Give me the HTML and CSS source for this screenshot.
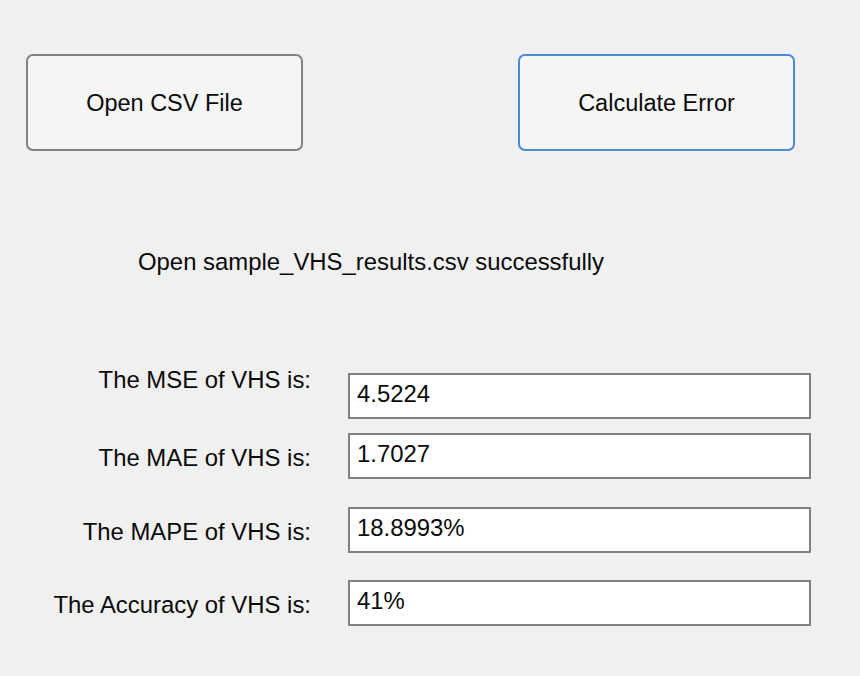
FILE: index.html
```html
<!DOCTYPE html>
<html lang="en">
<head>
<meta charset="utf-8">
<title>VHS Error Calculator</title>
<link rel="stylesheet" href="styles.css">
</head>
<body>
<div class="app">
  <div class="toolbar">
    <button class="btn">Open CSV File</button>
    <button class="btn btn-focus">Calculate Error</button>
  </div>
  <div class="status">Open sample_VHS_results.csv successfully</div>
  <div class="results">
    <div class="row row-1">
      <div class="label label-high">The MSE of VHS is:</div>
      <div class="field">4.5224</div>
    </div>
    <div class="row row-2">
      <div class="label">The MAE of VHS is:</div>
      <div class="field">1.7027</div>
    </div>
    <div class="row row-3">
      <div class="label">The MAPE of VHS is:</div>
      <div class="field">18.8993%</div>
    </div>
    <div class="row row-4">
      <div class="label">The Accuracy of VHS is:</div>
      <div class="field">41%</div>
    </div>
  </div>
</div>
</body>
</html>
```
FILE: styles.css
```css
html, body {
  margin: 0;
  padding: 0;
  background: #f0f0f0;
}

body {
  font-family: "Liberation Sans", Arial, Helvetica, sans-serif;
  font-size: 23.9px;
  line-height: 28px;
  color: #0a0a0a;
}

.app {
  width: 860px;
  height: 676px;
  padding-top: 54px;
  box-sizing: border-box;
}

.toolbar {
  display: flex;
  gap: 215px;
  padding-left: 26px;
}

.btn {
  width: 277px;
  height: 97px;
  box-sizing: border-box;
  border: 2px solid #828282;
  border-radius: 7px;
  background: #f5f5f5;
  font: inherit;
  font-size: 23.5px;
  color: inherit;
  padding: 0;
  display: flex;
  align-items: center;
  justify-content: center;
}

.btn-focus {
  border-color: #4a8ad6;
}

.status {
  margin-top: 97px;
  padding-left: 138px;
}

.results {
  margin-top: 97px;
  display: flex;
  flex-direction: column;
}

.row {
  display: flex;
  align-items: flex-start;
  gap: 37px;
}

.row-2 { margin-top: 14px; }
.row-3 { margin-top: 28px; }
.row-4 { margin-top: 27px; }

.label {
  width: 311px;
  text-align: right;
  margin-top: 11px;
  white-space: nowrap;
}

.label-high {
  margin-top: -7px;
}

.field {
  width: 463px;
  height: 46px;
  box-sizing: border-box;
  border: 2px solid #808080;
  background: #ffffff;
  padding: 5px 8px 0 7px;
}
```
